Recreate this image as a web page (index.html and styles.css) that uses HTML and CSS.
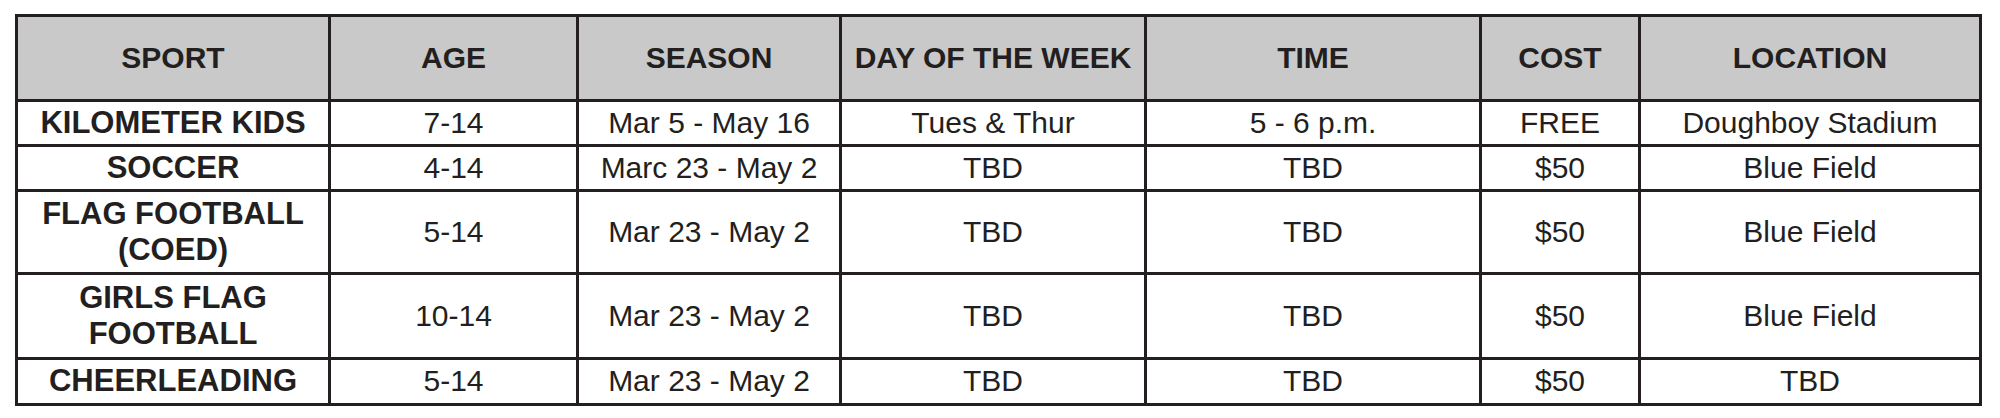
FILE: index.html
```html
<!DOCTYPE html>
<html>
<head>
<meta charset="utf-8">
<link rel="stylesheet" href="styles.css">
</head>
<body>
<div class="page">
<table class="schedule">
  <colgroup>
    <col class="c-sport"><col class="c-age"><col class="c-season"><col class="c-day"><col class="c-time"><col class="c-cost"><col class="c-loc">
  </colgroup>
  <thead>
    <tr>
      <th>SPORT</th><th>AGE</th><th>SEASON</th><th>DAY OF THE WEEK</th><th>TIME</th><th>COST</th><th>LOCATION</th>
    </tr>
  </thead>
  <tbody>
    <tr>
      <td class="sport">KILOMETER KIDS</td><td>7-14</td><td>Mar 5 - May 16</td><td>Tues &amp; Thur</td><td>5 - 6 p.m.</td><td>FREE</td><td>Doughboy Stadium</td>
    </tr>
    <tr>
      <td class="sport">SOCCER</td><td>4-14</td><td>Marc 23 - May 2</td><td>TBD</td><td>TBD</td><td>$50</td><td>Blue Field</td>
    </tr>
    <tr class="tall">
      <td class="sport">FLAG FOOTBALL<br>(COED)</td><td>5-14</td><td>Mar 23 - May 2</td><td>TBD</td><td>TBD</td><td>$50</td><td>Blue Field</td>
    </tr>
    <tr class="tall taller">
      <td class="sport">GIRLS FLAG<br>FOOTBALL</td><td>10-14</td><td>Mar 23 - May 2</td><td>TBD</td><td>TBD</td><td>$50</td><td>Blue Field</td>
    </tr>
    <tr class="last">
      <td class="sport">CHEERLEADING</td><td>5-14</td><td>Mar 23 - May 2</td><td>TBD</td><td>TBD</td><td>$50</td><td>TBD</td>
    </tr>
  </tbody>
</table>
</div>
</body>
</html>
```

FILE: styles.css
```css
html, body {
  margin: 0;
  padding: 0;
  background: #ffffff;
}

.page {
  padding: 14px 0 0 15px;
}

.schedule {
  border-collapse: collapse;
  table-layout: fixed;
  width: 1964px;
  font-family: "Liberation Sans", Arial, sans-serif;
  color: #231f20;
  font-size: 30px;
  line-height: 36px;
}

.c-sport { width: 313px; }
.c-age { width: 248px; }
.c-season { width: 263px; }
.c-day { width: 305px; }
.c-time { width: 335px; }
.c-cost { width: 159px; }
.c-loc { width: 341px; }

.schedule th,
.schedule td {
  border: 3px solid #231f20;
  text-align: center;
  vertical-align: middle;
  padding: 3px 2px;
  white-space: nowrap;
}

.schedule th {
  background: #c9c9c9;
  font-weight: bold;
  padding: 23px 2px 23px;
}

.schedule td.sport {
  font-weight: bold;
  font-size: 31px;
}

.schedule tr.tall td {
  padding-top: 4px;
  padding-bottom: 4px;
}

.schedule tr.taller td {
  padding-top: 5px;
  padding-bottom: 5px;
}

.schedule tr.last td {
  padding-top: 3px;
  padding-bottom: 4px;
}
```
